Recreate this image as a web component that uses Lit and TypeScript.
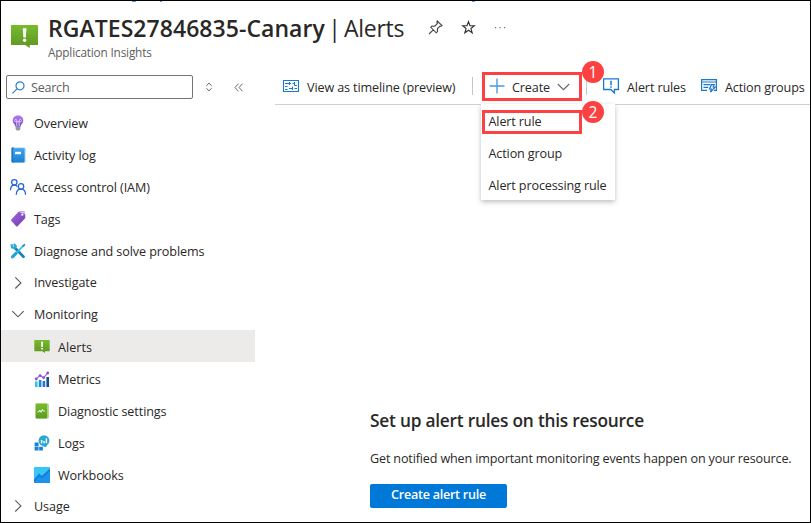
import { LitElement, html, css } from "lit";
import { customElement } from "lit/decorators.js";
import { classMap } from "lit/directives/class-map.js";

const alertIcon = html`<svg class="ic" viewBox="0 0 26 22">
  <defs><linearGradient id="g" x1="0" y1="0" x2="0" y2="1"><stop offset="0" stop-color="#76bc2d"/><stop offset="1" stop-color="#5e9624"/></linearGradient></defs>
  <path fill="url(#g)" d="M.6 0h24.800q.6 0 .6.6v18q0 .6-.6.6H18V22l-4.300-2.800H.6q-.6 0-.6-.6V.6Q0 0 .6 0z"/>
  <path fill="#fff" d="M11.300 3h3.600l-.6 9h-2.400z"/><circle cx="13.100" cy="14.600" r="1.600" fill="#fff"/></svg>`;

const icons: Record<string, unknown> = {
  overview: html`<svg class="ic" viewBox="0 0 16 16"><defs><linearGradient id="g" x1="0" y1="0" x2="0" y2="1"><stop offset="0" stop-color="#b77af4"/><stop offset="1" stop-color="#7a48cf"/></linearGradient></defs>
    <path fill="url(#g)" d="M8 .3a5.300 5.300 0 0 0-5.300 5.300c0 2.800 2.500 3.700 2.800 6.100h5c.3-2.400 2.800-3.300 2.800-6.100A5.300 5.300 0 0 0 8 .3z"/>
    <path fill="none" stroke="#e6d5fb" stroke-width=".9" d="M6.800 11V5.500a1.100 1.100 0 1 0-1.100 1.100h4.600a1.100 1.100 0 1 0-1.100-1.100V11"/>
    <path fill="#999" d="M5.600 12h4.800v2L9.300 15.500H6.700L5.600 14z"/></svg>`,
  log: html`<svg class="ic" viewBox="0 0 16 16"><defs><linearGradient id="g" x1="0" y1="0" x2="0" y2="1"><stop offset="0" stop-color="#3fa4ee"/><stop offset="1" stop-color="#1b80d4"/></linearGradient></defs>
    <rect x="1.500" y=".5" width="14" height="15" rx="1" fill="#a7cbea"/><path fill="#0f68b8" d="M1.500 1.500q0-1 1-1H4v15H2.500q-1 0-1-1z"/><rect x="2.700" y="1.300" width="11.800" height="14.200" rx=".8" fill="url(#g)"/><rect x="5" y="4.800" width="6" height="2.400" fill="#fff"/></svg>`,
  access: html`<svg class="ic" viewBox="0 0 16 16" fill="none" stroke="#1f66d6" stroke-width="1.250"><circle cx="4.300" cy="3.300" r="2.700"/><path d="M.5 11.300C.5 7.800 2.300 6 4.300 6c1.400 0 2.500.6 3.100 1.600"/><circle cx="11" cy="7.400" r="2.700"/><path d="M6.300 15.700c0-3.600 2-5.500 4.700-5.500s4.500 1.900 4.500 5.500"/></svg>`,
  tags: html`<svg class="ic" viewBox="0 0 16 16"><defs><linearGradient id="g" x1="0" y1="0" x2="1" y2="1"><stop offset="0" stop-color="#a66ae0"/><stop offset="1" stop-color="#6f3aae"/></linearGradient></defs>
    <path fill="url(#g)" d="M8.500.8 13.500.3q1.200 0 1.500 1.200l.3 5q0 .6-.4 1L7.600 15.300q-.7.6-1.400 0L1.300 10q-.6-.7 0-1.400z"/><path fill="#dac4ef" d="M9 1.200 13.600.4q1.200 0 1.400 1.200l.2 1.900-2.300-1.200z"/><circle cx="12.300" cy="3.700" r="1.100" fill="#fff"/></svg>`,
  diagnose: html`<svg class="ic" viewBox="0 0 16 16"><path stroke="#1682bd" stroke-width="2.700" stroke-linecap="round" d="m4.500 4.500 9 9.200"/><path fill="none" stroke="#2aa9dc" stroke-width="2.200" d="M1.500 1.300 2 4.300 4.500 5l1.300-1.700L3.800.9"/><path stroke="#38bce8" stroke-width="1.800" d="M13.700 2.300 5.800 10.500"/><path fill="#2494c9" d="m12 2.600 2.500-1.900 1 1-1.900 2.500z"/><path stroke="#22a5d8" stroke-width="3.200" stroke-linecap="round" d="m6 10.300-3.500 3.500"/></svg>`,
  right: html`<svg class="ic" viewBox="0 0 16 16" fill="none" stroke="#555" stroke-width="1.100"><path d="m5.300 2.300 5.600 5.600-5.600 5.600"/></svg>`,
  down: html`<svg class="ic" viewBox="0 0 16 16" fill="none" stroke="#555" stroke-width="1.100"><path d="m2.300 5.200 5.700 5.600 5.700-5.600"/></svg>`,
  alerts: alertIcon,
  metrics: html`<svg class="ic" viewBox="0 0 16 16"><path fill="#38bdf0" d="M1 10.500h2.600V16H1z"/><path fill="#1b8ad6" d="M4.800 9h2.600v7H4.800z"/><path fill="#2377cf" d="M8.600 10h2.600v6H8.600z"/><path fill="#124f93" d="M12.400 6H15v10h-2.600z"/><path fill="none" stroke="#9a63df" stroke-width="1.100" d="m2 8.200 4-3.700 3.700 2.300 4-5"/><g fill="#8a4fd6"><circle cx="2.200" cy="8" r="1.400"/><circle cx="6.100" cy="4.600" r="1.400"/><circle cx="9.700" cy="6.600" r="1.400"/><circle cx="13.700" cy="2" r="1.400"/></g></svg>`,
  diag: html`<svg class="ic" viewBox="0 0 16 16"><defs><linearGradient id="g" x1="0" y1="0" x2="0" y2="1"><stop offset="0" stop-color="#78be2e"/><stop offset="1" stop-color="#5a9a22"/></linearGradient></defs><rect x="2" y=".5" width="13" height="15" rx="1" fill="#b9dc94"/><rect x="1.500" y=".5" width="11.700" height="15" rx="1" fill="url(#g)"/><path fill="none" stroke="#fff" stroke-width=".9" d="M3.500 9h1.300l1-2 1.300 2.300 1.300-3 .8 1.700h1.800"/></svg>`,
  logs: html`<svg class="ic" viewBox="0 0 16 16"><path fill="#1583d9" d="M.6 7.500h4v3.700h-4zM.6 11.800h4v3.700h-4zM5.200 11.800h3.700v3.700H5.200z"/><circle cx="10" cy="5.600" r="5.400" fill="#2ba8d0"/><path fill="#2ba8d0" d="M8 10h4.500v2q-3 .5-4.500-2z"/><path fill="#fff" d="M6.900 5h1.400v3.300H6.900zM9.300 6h1.400v2.300H9.300zM11.700 3.200h1.400v5.100h-1.400z"/></svg>`,
  workbooks: html`<svg class="ic" viewBox="0 0 16 16"><rect width="16" height="16" rx=".6" fill="#38c6f4"/><path fill="#137fdb" d="M0 12.200 5.200 6.500l2.600 2.400L16 1.600V16H0z"/><path fill="#1c93ea" d="m0 15.500 5.200-6.300 2.800 2.500 8-7.700V16H0z"/></svg>`,
};

const nav: { icon: string; label: string; kind?: string }[] = [
  { icon: "overview", label: "Overview" },
  { icon: "log", label: "Activity log" },
  { icon: "access", label: "Access control (IAM)" },
  { icon: "tags", label: "Tags" },
  { icon: "diagnose", label: "Diagnose and solve problems" },
  { icon: "right", label: "Investigate", kind: "group" },
  { icon: "down", label: "Monitoring", kind: "group tall" },
  { icon: "alerts", label: "Alerts", kind: "child selected" },
  { icon: "metrics", label: "Metrics", kind: "child" },
  { icon: "diag", label: "Diagnostic settings", kind: "child" },
  { icon: "logs", label: "Logs", kind: "child" },
  { icon: "workbooks", label: "Workbooks", kind: "child" },
  { icon: "right", label: "Usage", kind: "group tall" },
];

const base = css`
  * { box-sizing: border-box; }
  svg { display: block; flex: none; overflow: visible; }
  .ic { width: 16px; height: 16px; }
`;

@customElement("nav-item")
class NavItem extends LitElement {
  static properties = { item: { attribute: false } };
  declare item: (typeof nav)[number];
  static styles = [base, css`
    :host { display: block; }
    .row { display: flex; align-items: center; gap: 8px; height: 32px; padding-left: 9px; width: 254px; letter-spacing: -0.09px; }
    span { padding-top: 2px; }
    .group { height: 31px; }
    .group span { padding-top: 0; }
    .tall { height: 32px; }
    .tall span { padding-top: 2px; }
    .child { padding: 1px 0 0 33px; }
    .child span { padding-top: 3px; }
    .selected { background: #edebe9; font-weight: 500; letter-spacing: 0.05px; }
    .selected .ic { height: 13px; }
  `];
  render() {
    const kinds = (this.item.kind ?? "").split(" ").filter(Boolean);
    return html`<div class=${classMap({ row: true, ...Object.fromEntries(kinds.map(k => [k, true])) })}>
      ${icons[this.item.icon]}<span>${this.item.label}</span></div>`;
  }
}

@customElement("app-root")
class AppRoot extends LitElement {
  static styles = [base, css`
    :host { display: block; width: 811px; height: 523px; font: 12.6px/18px "Open Sans", "Noto Sans", sans-serif; color: #292827; }
    .frame { position: relative; width: 811px; height: 523px; border: 1px solid #000; overflow: hidden; background: #fff; display: flex; flex-direction: column; }
    .scrap { position: absolute; top: 0; height: 1px; background: #5c9fd8; }
    .s1 { left: 131px; width: 4px; } .s2 { left: 159px; width: 2px; } .s3 { left: 471px; width: 3px; }
    header { height: 70px; flex: none; display: flex; padding-left: 10px; }
    .big { margin-top: 24px; width: 27px; height: 23px; }
    .big .ic { width: 27px; height: 23px; }
    .heads { margin-left: 10px; padding-top: 10px; }
    .title { display: flex; align-items: center; height: 33px; font-size: 23px; white-space: pre; }
    .title b { font-weight: 600; letter-spacing: 0.05px; }
    .title span { letter-spacing: -0.3px; word-spacing: -2.200px; }
    .title .pin { margin-left: 24px; }
    .title .star { margin-left: 17.500px; }
    .title .dots { margin-left: 18px; }
    .sub { font-size: 11.800px; line-height: 16px; color: #605e5c; letter-spacing: -0.18px; }
    .body { display: flex; flex: 1; }
    aside { width: 254px; flex: none; }
    .find { display: flex; align-items: center; height: 36px; padding: 0 0 4px 5px; }
    .search { width: 187px; height: 24px; border: 1px solid #767472; border-radius: 2px; display: flex; align-items: center; padding-left: 5px; gap: 6px; color: #605e5c; }
    .search span { padding-top: 1px; letter-spacing: -0.25px; }
    .sort { margin-left: 12px; } .fold { margin-left: 20px; }
    main { flex: 1; padding-left: 20px; }
    .bar { height: 34px; border-bottom: 1px solid #d2d0ce; display: flex; align-items: center; padding: 0 0 3px 8px; white-space: nowrap; }
    .bar .lab { margin-left: 8px; letter-spacing: -0.12px; padding-top: 3px; }
    .bar .view { width: 149px; }
    .sep { width: 1px; height: 18px; background: #c8c6c4; }
    .sep.a { margin-left: 16px; } .sep.b { margin-left: 4px; }
    .create { position: relative; margin-left: 9px; width: 100px; height: 29px; border: 3px solid #fb4141; display: flex; align-items: center; padding-left: 4px; }
    .bar .create .lab { margin-left: 7px; padding-top: 3px; }
    .create .chev { margin: 2px 0 0 7px; }
    .badge { position: absolute; width: 22px; height: 22px; border-radius: 50%; background: #fb4141; color: #fff; font: 15.500px/22px "Open Sans", sans-serif; text-align: center; z-index: 4; }
    .create .badge { left: 97px; top: -14px; }
    .bar .ar { margin-left: 16px; } .bar .ag { margin-left: 15px; }
    .menu { position: absolute; left: -4px; top: 29px; width: 134px; height: 96px; background: #fff; box-shadow: 0 2px 5px rgba(0,0,0,.25); z-index: 2; padding: 2px 0 0 7.500px; line-height: 32px; letter-spacing: -0.13px; }
    .ring { position: absolute; left: 1px; top: 6px; width: 100px; height: 24px; border: 3px solid #fb4141; }
    .create .menu .badge { left: 101px; top: -3px; letter-spacing: 0; }
    .empty { padding: 304px 0 0 95px; }
    h2 { margin: 0; font-size: 17.300px; line-height: 24px; font-weight: 600; letter-spacing: -0.22px; }
    p { margin: 16px 0 15px; line-height: 20px; white-space: nowrap; letter-spacing: -0.155px; }
    button { display: block; border: 0; border-radius: 2px; width: 137px; height: 24px; padding: 0 0 2px; background: #0078d7; color: #fff; font: 600 12.600px/22px "Open Sans", sans-serif; letter-spacing: -0.27px; }
  `];
  render() {
    return html`<div class="frame">
      <i class="scrap s1"></i><i class="scrap s2"></i><i class="scrap s3"></i>
      <header>
        <div class="big">${alertIcon}</div>
        <div class="heads">
          <div class="title"><b>RGATES27846835-Canary</b><span> | Alerts</span>
            <svg class="pin" width="15" height="15" viewBox="0 0 15 15" fill="none" stroke="#444" stroke-width="1.100"><path d="m9.300 1 4.700 4.700-1.300.7-.7-.3-2.600 2.700.1 2.800-1.200 1.200-5.500-5.500L4 6.100l2.800.1 2.700-2.700-.7-1.200zM5.300 9.800 1 14"/></svg>
            <svg class="star" width="15" height="15" viewBox="0 0 15 15" fill="none" stroke="#333" stroke-width="1.100"><path d="m7.500 1.700 1.500 4.100h4.300L9.900 8.500l1.300 4.300-3.700-2.600-3.700 2.600 1.300-4.300-3.400-2.700H6z"/></svg>
            <svg class="dots" width="13" height="3" viewBox="0 0 13 3" fill="#777"><path d="M1 1h1.200v1.200H1zM5.500 1h1.200v1.200H5.500zM10 1h1.200v1.200H10z"/></svg>
          </div>
          <div class="sub">Application Insights</div>
        </div>
      </header>
      <div class="body">
        <aside>
          <div class="find">
            <div class="search"><svg width="13" height="13" viewBox="0 0 13 13" fill="none" stroke="#2b7fd0" stroke-width="1.200"><circle cx="8" cy="4.800" r="4"/><path d="M5.200 7.600.5 12.300"/></svg><span>Search</span></div>
            <svg class="sort" width="8" height="10" viewBox="0 0 8 10" fill="none" stroke="#666" stroke-width="1"><path d="M1.300 3.800 4 1.200l2.700 2.600M1.300 6.200 4 8.800l2.700-2.600"/></svg>
            <svg class="fold" width="11" height="9" viewBox="0 0 11 9" fill="none" stroke="#666" stroke-width="1"><path d="M5.500.7 2 4.500 5.500 8.300M9.500.7 6 4.500 9.500 8.300"/></svg>
          </div>
          ${nav.map(n => html`<nav-item .item=${n}></nav-item>`)}
        </aside>
        <main>
          <div class="bar">
            <svg width="16" height="12" viewBox="0 0 16 12" fill="none" stroke="#1a78cf" stroke-width="1.100"><path d="M.5.5h15v11H.5zM2 3.500h6M6.500 2v3M9.500 3.500h2M11.500 2v3.500M11.500 5.500H14M2 6.500h2.500M6 8.500h3.500M9.500 6.500v3.500M2 9.500h2.500M11.500 8.500H14"/></svg>
            <span class="lab view">View as timeline (preview)</span>
            <i class="sep a"></i>
            <div class="create">
              <svg width="16" height="16" viewBox="0 0 16 16" stroke="#4a9ae0" stroke-width="1.400"><path d="M8 .5v15M.5 8h15"/></svg>
              <span class="lab">Create</span>
              <svg class="chev" width="13" height="8" viewBox="0 0 13 8" fill="none" stroke="#666" stroke-width="1.100"><path d="m.8 1 5.700 5.700L12.200 1"/></svg>
              <span class="badge">1</span>
              <div class="menu"><i class="ring"></i><span class="badge">2</span>
                <div>Alert rule</div><div>Action group</div><div>Alert processing rule</div></div>
            </div>
            <i class="sep b"></i>
            <svg class="ar" width="16" height="16" viewBox="0 0 16 16" fill="none" stroke="#1a78cf" stroke-width="1.300"><path d="M.6 .8h14.800v10.700h-4v3.500L7.800 11.500H.6z"/><path stroke-width="1.500" d="M8 2.800v4.400M8 8.200v1.500"/></svg>
            <span class="lab">Alert rules</span>
            <svg class="ag" width="16" height="14" viewBox="0 0 16 14" fill="none" stroke="#1a78cf" stroke-width="1.200"><path d="M6 11.400H.6V.6h14.800v10.800h-2.500M.6 3h14.800M2.500 5.700h7M2.500 8.400h4.800"/><path d="m10.500 5.700h2.700l-1 2.300h2L9.500 13.200l.8-3.200H8.500z"/></svg>
            <span class="lab">Action groups</span>
          </div>
          <section class="empty">
            <h2>Set up alert rules on this resource</h2>
            <p>Get notified when important monitoring events happen on your resource.</p>
            <button>Create alert rule</button>
          </section>
        </main>
      </div>
    </div>`;
  }
}
